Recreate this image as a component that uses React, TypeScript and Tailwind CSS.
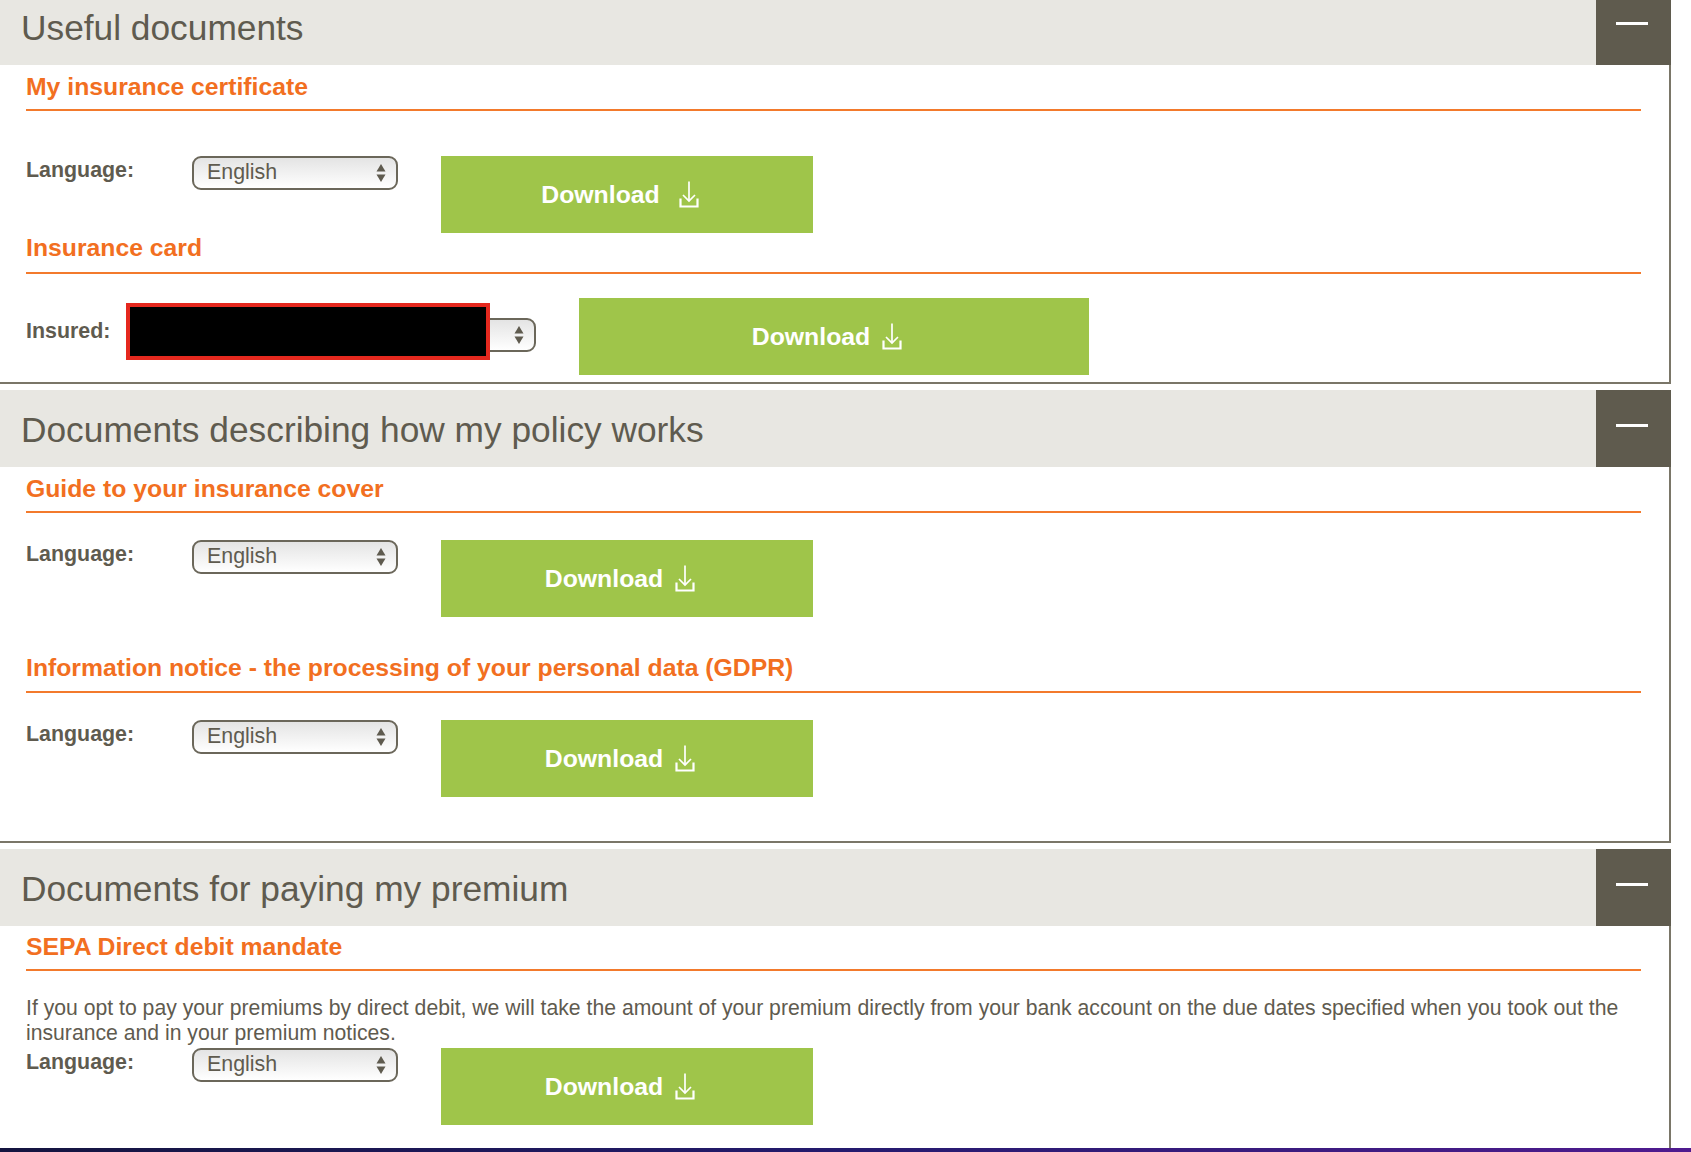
const font = { fontFamily: '"Liberation Sans", Arial, sans-serif' }

function DownloadIcon() {
    return (
        <svg width="20" height="27" viewBox="0 0 20 27" fill="none" stroke="white" strokeWidth="1.7" className="shrink-0">
            <path d="M10 0.5V20" />
            <path d="M4 14L10 20L16 14" />
            <path d="M1.5 17.5V25.5H18.5V17.5" strokeWidth="2.2" />
        </svg>
    )
}

function PanelHeader({ title, height = "h-[77px]", titleLeading = "leading-[79px]", minusClass = "mt-[34px]" }: { title: string; height?: string; titleLeading?: string; minusClass?: string }) {
    return (
        <div className={`flex ${height} bg-[#e8e7e2]`}>
            <h2 className={`flex-1 pl-[21px] text-[35.3px] text-[#5f5b4f] ${titleLeading}`}>{title}</h2>
            <div className="-mr-[2px] flex w-[75px] justify-center bg-[#5f5b4e] pr-[3px]">
                <div className={`h-[3px] w-[32px] bg-white ${minusClass}`} />
            </div>
        </div>
    )
}

function SubHeading({ title, className = "h-[46px] pt-[8px]" }: { title: string; className?: string }) {
    return (
        <h3 className={`ml-[26px] mr-[28px] border-b-2 border-[#f37a2c] text-[24.75px] font-bold leading-[28px] text-[#f26f21] ${className}`}>
            {title}
        </h3>
    )
}

function Arrows() {
    return (
        <svg width="10" height="20" viewBox="0 0 10 20" className="pointer-events-none absolute right-[10px] top-[5px]" fill="#5f5b4f">
            <path d="M5 1L9.5 8.5H0.5Z" />
            <path d="M5 19L9.5 11.5H0.5Z" />
        </svg>
    )
}

function Select({ width = "w-[206px]" }: { width?: string }) {
    return (
        <div className={`relative h-[34px] ${width} shrink-0 rounded-[9px] border-2 border-[#6b675a] bg-gradient-to-b from-[#e4e4e4] to-white`}>
            <div className="pl-[13px] text-[21.4px] leading-[28px] text-[#5f5b4f]">English</div>
            <Arrows />
        </div>
    )
}

function DownloadButton({ width = "w-[372px]", gap = "gap-[12px]" }: { width?: string; gap?: string }) {
    return (
        <button className={`flex h-[77px] ${width} items-center justify-center ${gap} bg-[#9fc54a] pr-[14px] text-[24.8px] font-bold text-white`}>
            Download
            <DownloadIcon />
        </button>
    )
}

function LanguageRow({ className, gap }: { className: string; gap?: string }) {
    return (
        <div className={`flex items-start pl-[26px] ${className}`}>
            <span className="w-[166px] shrink-0 text-[21.4px] font-bold leading-[28px] text-[#5f5b4f]">Language:</span>
            <Select />
            <div className="ml-[43px]">
                <DownloadButton gap={gap} />
            </div>
        </div>
    )
}

export default function App() {
    return (
        <div className="flex h-screen flex-col overflow-hidden bg-white" style={font}>
            <div className="flex flex-1 flex-col pr-[20px]">
                <section className="border-r-2 border-b-2 border-[#7a7668]">
                    <PanelHeader title="Useful documents" height="h-[65px]" titleLeading="leading-[56px]" minusClass="mt-[22px]" />
                    <SubHeading title="My insurance certificate" />
                    <LanguageRow className="mt-[45px]" gap="gap-[19px]" />
                    <SubHeading title="Insurance card" className="h-[41px] pt-[1px]" />
                    <div className="mt-[24px] mb-[7px] flex items-start pl-[26px]">
                        <span className="mt-[19px] w-[100px] shrink-0 text-[21.4px] font-bold leading-[28px] text-[#5f5b4f]">Insured:</span>
                        <div className="mt-[20px]">
                            <div className="relative">
                                <Select width="w-[410px]" />
                                <div className="absolute left-0 top-[-15px] h-[57px] w-[364px] border-4 border-[#e5281e] bg-black" />
                            </div>
                        </div>
                        <div className="ml-[43px]">
                            <DownloadButton width="w-[510px]" />
                        </div>
                    </div>
                </section>

                <section className="mt-[6px] border-r-2 border-b-2 border-[#7a7668]">
                    <PanelHeader title="Documents describing how my policy works" />
                    <SubHeading title="Guide to your insurance cover" />
                    <LanguageRow className="mt-[27px]" />
                    <SubHeading title="Information notice - the processing of your personal data (GDPR)" className="mt-[30px] h-[46px] pt-[7px]" />
                    <LanguageRow className="mt-[27px] mb-[44px]" />
                </section>

                <section className="mt-[6px] flex-1 border-r-2 border-[#7a7668]">
                    <PanelHeader title="Documents for paying my premium" />
                    <SubHeading title="SEPA Direct debit mandate" className="h-[45px] pt-[7px]" />
                    <p className="ml-[26px] mr-[28px] mt-[25px] text-[21.2px] leading-[24.5px] text-[#5f5b4f]">
                        If you opt to pay your premiums by direct debit, we will take the amount of your premium directly from your bank account on the due dates specified when you took out the insurance and in your premium notices.
                    </p>
                    <LanguageRow className="mt-[3px]" />
                </section>
            </div>
            <div className="h-[4px] bg-gradient-to-r from-[#14143f] via-[#241a6e] to-[#4f1a8f]" />
        </div>
    )
}
